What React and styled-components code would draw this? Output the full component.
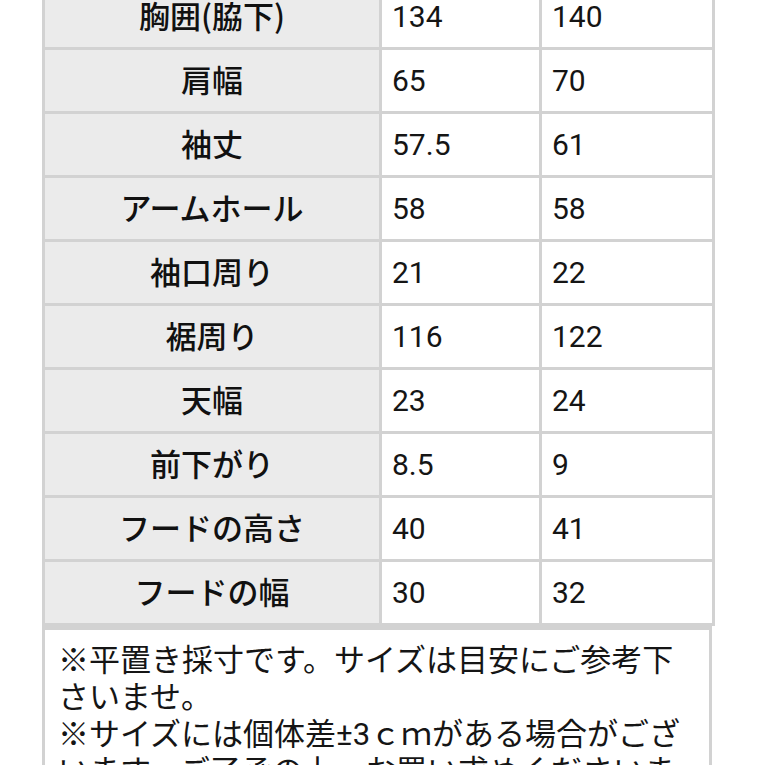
import React from 'react';
import styled, { createGlobalStyle } from 'styled-components';

const GlobalStyle = createGlobalStyle`
  html, body {
    margin: 0;
    padding: 0;
    background: #ffffff;
    overflow: hidden;
  }
  body {
    font-family: "Noto Sans CJK JP", "Noto Sans", sans-serif;
    color: #151515;
  }
`;

const Page = styled.div`
  width: 765px;
  height: 765px;
  overflow: hidden;
  padding-left: 42px;
  box-sizing: border-box;
`;

const Sheet = styled.div`
  width: 670px;
  margin-top: -17px;
`;

const SizeTable = styled.table`
  width: 670px;
  border-collapse: collapse;
  table-layout: fixed;
  border: 3px solid #d2d2d2;
`;

const Row = styled.tr`
  height: 64px;
`;

const Label = styled.th`
  background: #ebebeb;
  border: 3px solid #d2d2d2;
  font-family: "Noto Sans CJK JP", sans-serif;
  font-weight: 500;
  font-size: 31px;
  line-height: 40px;
  text-align: center;
  padding: 0 0 4px;
  color: #111;
`;

const Value = styled.td`
  background: #ffffff;
  border: 3px solid #d2d2d2;
  font-family: Roboto, "Noto Sans", sans-serif;
  font-size: 30px;
  padding: 0 0 1px 10px;
  color: #151515;
`;

const Note = styled.div`
  border: 3px solid #d2d2d2;
  border-top-width: 4px;
  padding: 9px 16px 0 13px;
  font-size: 31px;
  line-height: 37px;
  color: #151515;
  min-height: 200px;
`;

const Narrow = styled.span`
  font-family: Roboto, "Noto Sans", sans-serif;
  line-height: 1;
`;

const rows = [
  ['胸囲(脇下)', '134', '140'],
  ['肩幅', '65', '70'],
  ['袖丈', '57.5', '61'],
  ['アームホール', '58', '58'],
  ['袖口周り', '21', '22'],
  ['裾周り', '116', '122'],
  ['天幅', '23', '24'],
  ['前下がり', '8.5', '9'],
  ['フードの高さ', '40', '41'],
  ['フードの幅', '30', '32'],
];

export default function App() {
  return (
    <Page>
      <GlobalStyle />
      <Sheet>
        <SizeTable>
          <colgroup>
            <col style={{ width: 337 }} />
            <col style={{ width: 160 }} />
            <col style={{ width: 173 }} />
          </colgroup>
          <tbody>
            {rows.map(([label, m, l]) => (
              <Row key={label}>
                <Label>{label}</Label>
                <Value>{m}</Value>
                <Value>{l}</Value>
              </Row>
            ))}
          </tbody>
        </SizeTable>
        <Note>
          ※平置き採寸です。サイズは目安にご参考下さいませ。
          <br />
          ※サイズには個体差<Narrow>±3</Narrow>ｃｍがある場合がございます。ご了承の上、お買い求めくださいませ。
        </Note>
      </Sheet>
    </Page>
  );
}
